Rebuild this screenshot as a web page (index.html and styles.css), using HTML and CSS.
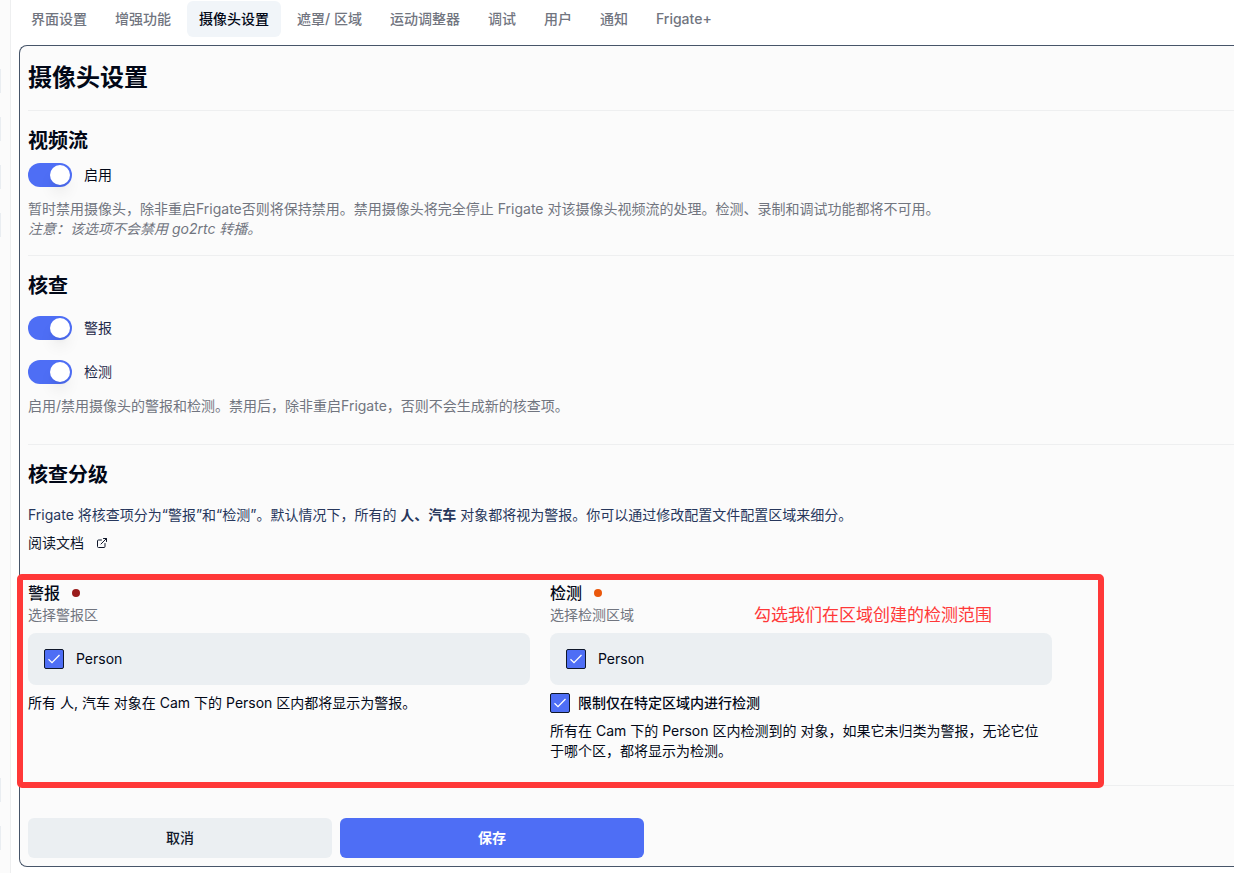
FILE: index.html
```html
<!DOCTYPE html>
<html lang="zh-CN">
<head>
<meta charset="utf-8">
<meta name="viewport" content="width=device-width, initial-scale=1">
<title>摄像头设置</title>
<link rel="stylesheet" href="styles.css">
</head>
<body>
<div class="app">
  <aside class="rail">
    <div class="rail-group"><span></span><span></span><span></span><span></span></div>
    <div class="rail-group"><span></span><span></span></div>
  </aside>
  <main class="main">
    <nav class="tabs">
      <button type="button" class="tab">界面设置</button>
      <button type="button" class="tab">增强功能</button>
      <button type="button" class="tab active">摄像头设置</button>
      <button type="button" class="tab">遮罩/ 区域</button>
      <button type="button" class="tab">运动调整器</button>
      <button type="button" class="tab">调试</button>
      <button type="button" class="tab">用户</button>
      <button type="button" class="tab">通知</button>
      <button type="button" class="tab">Frigate+</button>
    </nav>
    <div class="panel">
      <h1 class="title">摄像头设置</h1>
      <section class="section">
        <h2 class="heading">视频流</h2>
        <div class="switch-row">
          <input type="checkbox" class="switch" id="enabled" checked>
          <label for="enabled">启用</label>
        </div>
        <p class="hint">暂时禁用摄像头，除非重启Frigate否则将保持禁用。禁用摄像头将完全停止 Frigate 对该摄像头视频流的处理。检测、录制和调试功能都将不可用。<br><em>注意：该选项不会禁用 go2rtc 转播。</em></p>
      </section>
      <section class="section review">
        <h2 class="heading">核查</h2>
        <div class="switches">
          <div class="switch-row soft">
            <input type="checkbox" class="switch" id="alerts" checked>
            <label for="alerts">警报</label>
          </div>
          <div class="switch-row soft">
            <input type="checkbox" class="switch" id="detections" checked>
            <label for="detections">检测</label>
          </div>
        </div>
        <p class="hint">启用/禁用摄像头的警报和检测。禁用后，除非重启Frigate，否则不会生成新的核查项。</p>
      </section>
      <section class="section classify">
        <h2 class="heading">核查分级</h2>
        <p class="intro">Frigate 将核查项分为“警报”和“检测”。默认情况下，所有的 <strong>人、汽车</strong> 对象都将视为警报。你可以通过修改配置文件配置区域来细分。</p>
        <a class="doc-link" href="#">阅读文档
          <svg class="ext" viewBox="0 0 24 24" aria-hidden="true"><path d="M15 3h6v6M10 14 21 3M18 13v6a2 2 0 0 1-2 2H5a2 2 0 0 1-2-2V8a2 2 0 0 1 2-2h6"/></svg>
        </a>
        <div class="columns">
          <div class="column">
            <h3 class="zone-title">警报<span class="dot alert"></span></h3>
            <p class="zone-sub">选择警报区</p>
            <div class="zone-box">
              <input type="checkbox" class="check" id="alert-person" checked>
              <label for="alert-person">Person</label>
            </div>
            <p class="zone-text">所有 人, 汽车 对象在 Cam 下的 Person 区内都将显示为警报。</p>
          </div>
          <div class="column">
            <h3 class="zone-title">检测<span class="dot detect"></span></h3>
            <p class="zone-sub">选择检测区域</p>
            <div class="zone-box">
              <input type="checkbox" class="check" id="detect-person" checked>
              <label for="detect-person">Person</label>
            </div>
            <div class="limit">
              <input type="checkbox" class="check" id="limit" checked>
              <label for="limit">限制仅在特定区域内进行检测</label>
            </div>
            <p class="zone-text">所有在 Cam 下的 Person 区内检测到的 对象，如果它未归类为警报，无论它位于哪个区，都将显示为检测。</p>
          </div>
          <div class="callout"><span class="callout-text">勾选我们在区域创建的检测范围</span></div>
        </div>
      </section>
      <div class="section actions">
        <div class="buttons">
          <button type="button" class="btn">取消</button>
          <button type="button" class="btn primary">保存</button>
        </div>
      </div>
    </div>
  </main>
</div>
</body>
</html>
```

FILE: styles.css
```css
* { box-sizing: border-box; }

body {
  margin: 0;
  background: #fff;
  color: #020817;
  font-family: Inter, "Noto Sans CJK SC", sans-serif;
  font-size: 14px;
  line-height: 20px;
}

h1, h2, h3, p { margin: 0; }
button, input { font: inherit; margin: 0; }

.app { display: flex; min-height: 100vh; }

.rail {
  display: flex;
  flex: none;
  flex-direction: column;
  justify-content: space-between;
  width: 11px;
  padding: 69px 0 23px;
  background: #fbfbfb;
  border-right: 1px solid #eeeff0;
}
.rail-group { display: flex; flex-direction: column; gap: 24px; }
.rail-group span { width: 1px; height: 24px; background: #e9edf1; }

.main { flex: 1; min-width: 0; padding: 1px 0 6px 8px; }

.tabs { display: flex; gap: 4px; }
.tab {
  flex: none;
  padding: 8px 12px;
  border: 0;
  border-radius: 6px;
  background: transparent;
  color: #71757f;
  font-weight: 500;
  white-space: nowrap;
}
.tab.active { background: #f1f5f9; color: #020817; }

.panel {
  margin-top: 8px;
  padding: 8px 0 8px 8px;
  border: 1px solid #475569;
  border-right: 0;
  border-radius: 8px 0 0 8px;
  background: #fbfbfb;
}

.title {
  margin: 8px 0 16px;
  font-size: 24px;
  font-weight: 700;
  line-height: 32px;
}

.section { padding: 16px 0; border-top: 1px solid #eeeff0; }
.heading { font-size: 20px; font-weight: 700; line-height: 28px; }

.switch-row { display: flex; align-items: center; gap: 12px; margin-top: 8px; }
.switch-row.soft { margin-top: 0; color: #1e2a4a; }
.switches { display: flex; flex-direction: column; gap: 20px; margin-top: 16px; }

.switch {
  display: flex;
  flex: none;
  justify-content: flex-end;
  width: 44px;
  height: 24px;
  padding: 2px;
  border-radius: 12px;
  background: #4e6ef5;
  appearance: none;
}
.switch::before {
  content: "";
  width: 20px;
  height: 20px;
  border-radius: 50%;
  background: #fff;
  box-shadow: 0 10px 15px -3px rgb(0 0 0 / 10%), 0 4px 6px -4px rgb(0 0 0 / 10%);
}
.switch:not(:checked) { justify-content: flex-start; background: #cbd5e1; }

.hint { margin-top: 12px; color: #71757f; }
.review { padding-bottom: 28px; }
.classify { padding-bottom: 24px; }

.intro { margin-top: 16px; color: #27375c; }
.intro strong { font-weight: 700; }

.doc-link {
  display: flex;
  align-items: center;
  gap: 12px;
  width: fit-content;
  margin-top: 8px;
  color: #0f172a;
  text-decoration: none;
}
.ext {
  width: 12px;
  height: 12px;
  fill: none;
  stroke: currentColor;
  stroke-width: 2;
  stroke-linecap: round;
  stroke-linejoin: round;
}

.columns {
  position: relative;
  display: grid;
  grid-template-columns: 1fr 1fr;
  gap: 20px;
  max-width: 1024px;
  margin-top: 28px;
}

.zone-title {
  display: flex;
  align-items: center;
  gap: 12px;
  font-size: 16px;
  font-weight: 500;
  line-height: 24px;
}
.dot { width: 8px; height: 8px; border: 1px solid transparent; border-radius: 50%; }
.dot { width: 8px; height: 8px; border: 0; }
.dot.alert { background: #991b1b; }
.dot.detect { background: #ea580c; }
.zone-sub { color: #71757f; }

.zone-box {
  display: flex;
  align-items: center;
  gap: 12px;
  margin: 8px 0;
  padding: 16px;
  border-radius: 8px;
  background: #ebeff2;
}

.check {
  flex: none;
  width: 20px;
  height: 20px;
  border: 1px solid #0f172a;
  border-radius: 2px;
  background: #4e6ef5;
  appearance: none;
}
.check:checked {
  background-image: url("data:image/svg+xml,%3Csvg xmlns='http://www.w3.org/2000/svg' viewBox='0 0 18 18'%3E%3Cpath d='M3.5 9.3 7 12.6 14.5 5' fill='none' stroke='white' stroke-width='1.3'/%3E%3C/svg%3E");
}

.limit { display: flex; align-items: center; gap: 8px; margin-bottom: 8px; font-weight: 500; }

.callout {
  position: absolute;
  inset: -7px -52px -27px -11px;
  border: 6px solid #ff3838;
  border-radius: 5px;
  pointer-events: none;
}
.callout-text {
  position: absolute;
  top: 23px;
  right: 106px;
  color: #ff3838;
  font-size: 17px;
  line-height: 24px;
}

.actions { padding: 32px 0 0; }
.buttons { display: grid; grid-template-columns: 1fr 1fr; gap: 8px; max-width: 616px; }
.btn {
  padding: 10px 16px;
  border: 0;
  border-radius: 6px;
  background: #ebeff2;
  color: #0f172a;
  font-weight: 500;
}
.btn.primary { background: #4e6ef5; color: #fff; font-weight: 700; }
```
